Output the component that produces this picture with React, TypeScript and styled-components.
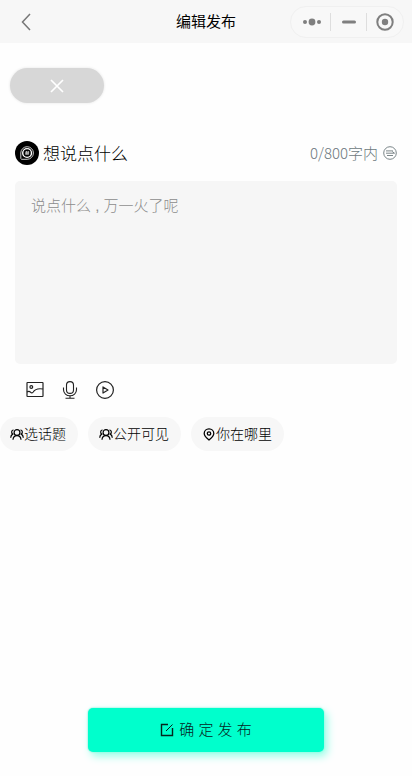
import React from 'react';
import styled, { createGlobalStyle } from 'styled-components';

const GlobalStyle = createGlobalStyle`
  * { box-sizing: border-box; }
  body {
    margin: 0;
    background: #fefefe;
    font-family: 'Liberation Sans', 'Noto Sans CJK SC', sans-serif;
    font-weight: 300;
    color: #000;
  }
  button, textarea { font: inherit; color: inherit; }
  button { border: 0; padding: 0; background: none; cursor: pointer; }
  svg { display: block; flex: none; }
`;

const Page = styled.div`
  min-height: 100vh;
  display: flex;
  flex-direction: column;
  overflow-x: hidden;
`;

const TopBar = styled.header`
  display: grid;
  grid-template-columns: 1fr auto 1fr;
  align-items: center;
  height: 43px;
  padding: 0 8px 0 16px;
  background: #f7f7f7;
`;

const Title = styled.h1`
  margin: 0;
  padding-right: 8px;
  font-size: 15px;
  line-height: 20px;
  font-weight: 400;
  color: #000;
`;

const IconButton = styled.button`
  display: flex;
  align-items: center;
  justify-content: center;
  width: 20px;
  height: 24px;
`;

const Capsule = styled.div`
  justify-self: end;
  display: flex;
  align-items: center;
  width: 114px;
  height: 32px;
  padding-left: 3px;
  border: 1px solid #f0f0f0;
  border-radius: 16px;
  background: #f8f8f8;
  color: #7f7f7f;
`;

const CapsuleButton = styled.button`
  flex: 1;
  display: flex;
  align-items: center;
  justify-content: center;
  height: 18px;
  & + & { border-left: 1px solid #dedede; }
`;

const CloseButton = styled.button`
  display: flex;
  align-items: center;
  justify-content: center;
  width: 94px;
  height: 35px;
  margin: 25px 0 0 10px;
  border-radius: 18px;
  background: #d7d7d7;
  box-shadow: 0 0 3px #e4e4e4;
`;

const Editor = styled.section`
  margin: 36px 15px 0;
`;

const EditorHead = styled.div`
  display: flex;
  align-items: center;
  justify-content: space-between;
  height: 28px;
`;

const Prompt = styled.label`
  display: flex;
  align-items: center;
  gap: 4px;
  font-family: 'Noto Sans CJK SC', sans-serif;
  font-size: 17px;
  line-height: 24px;
`;

const Counter = styled.span`
  display: flex;
  align-items: center;
  gap: 5px;
  font-family: 'Noto Sans CJK SC', sans-serif;
  font-size: 15px;
  line-height: 20px;
  color: #6c787c;
`;

const TextBox = styled.textarea`
  display: block;
  width: 100%;
  height: 183px;
  margin-top: 14px;
  padding: 14px 16px;
  border: 0;
  border-radius: 5px;
  outline: 0;
  resize: none;
  background: #f6f6f6;
  font-size: 15px;
  line-height: 22px;
  &::placeholder { color: #8c8c8c; opacity: 1; }
`;

const MediaBar = styled.div`
  display: flex;
  gap: 15px;
  margin: 14px 0 0 10px;
  color: #222;
`;

const Chips = styled.div`
  display: flex;
  gap: 10px;
  margin-top: 15px;
`;

const Chip = styled.button<{ $flush?: boolean }>`
  display: flex;
  align-items: center;
  height: 34px;
  padding: 0 12px 0 ${p => (p.$flush ? '10px' : '11px')};
  border-radius: 17px;
  background: #f7f7f7;
  font-size: 14px;
  line-height: 20px;
  white-space: nowrap;
`;

const Footer = styled.footer`
  display: flex;
  justify-content: center;
  margin-top: auto;
  padding: 24px 88px;
`;

const Submit = styled.button`
  flex: 1;
  display: flex;
  align-items: center;
  justify-content: center;
  gap: 5px;
  height: 44px;
  border-radius: 5px;
  background: #00ffcc;
  box-shadow: 3px 4px 8px #8fffe6, 0 0 2px #55e5cb;
  font-size: 15px;
  line-height: 20px;
  color: #06251d;
`;

const stroke = { fill: 'none', stroke: 'currentColor' } as const;

const BackIcon = () => (
  <svg width="10" height="18" viewBox="0 0 10 18" {...stroke} strokeWidth="1.5">
    <path d="M9 1 1.5 9 9 17" stroke="#777" />
  </svg>
);

const MoreIcon = () => (
  <svg width="20" height="8" viewBox="0 0 20 8" fill="currentColor">
    <circle cx="3" cy="4" r="2" /><circle cx="10" cy="4" r="3.4" /><circle cx="17" cy="4" r="2" />
  </svg>
);

const MinimizeIcon = () => (
  <svg width="14" height="4" viewBox="0 0 14 4" fill="currentColor">
    <rect y="0.5" width="14" height="3" rx="1.5" />
  </svg>
);

const ExitIcon = () => (
  <svg width="18" height="18" viewBox="0 0 18 18" {...stroke}>
    <circle cx="9" cy="9" r="7.7" strokeWidth="2" />
    <circle cx="9" cy="9" r="3.2" fill="currentColor" stroke="none" />
  </svg>
);

const CrossIcon = () => (
  <svg width="14" height="14" viewBox="0 0 14 14" fill="none" stroke="#fff" strokeWidth="1.7">
    <path d="M1 1 13 13M13 1 1 13" />
  </svg>
);

const TopicIcon = () => (
  <svg width="24" height="24" viewBox="0 0 24 24" fill="none">
    <circle cx="12" cy="12" r="12" fill="#000" />
    <path d="M5.8 17.8V12a6.3 6.3 0 1 1 6.3 6.3H6.2" stroke="#ccc" strokeWidth="1" />
    <circle cx="12.1" cy="12" r="4.4" stroke="#fff" strokeWidth="1.4" />
    <path d="m11.5 10-.4 4m2.200-4-.4 4m-2.700-2.800h4m-4.100 1.600h4" stroke="#ddd" strokeWidth=".8" />
  </svg>
);

const FaceIcon = () => (
  <svg width="14" height="14" viewBox="0 0 14 14" {...stroke} strokeWidth="0.9">
    <circle cx="7" cy="7" r="6.3" />
    <path d="M3 4.900h7M3 7.200h8.500L9.300 5.600M4 9.500h6" />
  </svg>
);

const PictureIcon = () => (
  <svg width="20" height="20" viewBox="0 0 20 20" {...stroke} strokeWidth="1.2">
    <rect x="2" y="2.5" width="16" height="14" rx="0.5" />
    <circle cx="6.3" cy="7" r="1.4" />
    <path d="M2 12c1.400-.8 2.600-.8 3.700.4.8.9 1.800.7 2.500-.4C9.800 9.300 13 8.200 18 9" />
  </svg>
);

const MicIcon = () => (
  <svg width="20" height="20" viewBox="0 0 20 20" {...stroke} strokeWidth="1.1">
    <rect x="6.5" y="1.6" width="7" height="11.8" rx="3.5" />
    <path d="M3.500 7.500v2.300a6.500 6 0 0 0 13 0V7.500M10 15.800v2.400M5.500 18.300h9" />
  </svg>
);

const PlayIcon = () => (
  <svg width="20" height="20" viewBox="0 0 20 20" {...stroke} strokeWidth="1.2">
    <circle cx="10" cy="10" r="8.4" />
    <path d="M8 6.900v6.200l5-3.100z" strokeLinejoin="round" />
  </svg>
);

const PeopleIcon = () => (
  <svg width="14" height="13" viewBox="0 0 14 13" {...stroke} strokeWidth="1.2">
    <circle cx="7" cy="4.5" r="2.9" />
    <path d="M3 11.800c.1-2.500 1.400-4.200 4-4.200s3.900 1.700 4 4.200M3.600 2C1.200 2 1.200 5.300 2.700 6.100 1.300 6.800.8 8 .7 9.700M10.400 2c2.400 0 2.400 3.300.9 4.100 1.400.7 1.900 1.900 2 3.600" />
  </svg>
);

const PinIcon = () => (
  <svg width="14" height="13" viewBox="0 0 14 13" {...stroke} strokeWidth="1.3">
    <path d="M7 12C4.300 9.700 2.200 7.700 2.200 5.400a4.800 4.600 0 0 1 9.600 0C11.800 7.700 9.700 9.700 7 12z" />
    <circle cx="7" cy="5.5" r="1.7" />
  </svg>
);

const EditIcon = () => (
  <svg width="14" height="14" viewBox="0 0 14 14" {...stroke} strokeWidth="1.4">
    <path d="M8 1.500H1.500v11h11V5" />
    <path d="m6 8 6.500-6.500" strokeWidth="1" />
  </svg>
);

export default function App() {
  return (
    <>
      <GlobalStyle />
      <Page>
        <TopBar>
          <IconButton aria-label="返回"><BackIcon /></IconButton>
          <Title>编辑发布</Title>
          <Capsule>
            <CapsuleButton aria-label="更多"><MoreIcon /></CapsuleButton>
            <CapsuleButton aria-label="最小化"><MinimizeIcon /></CapsuleButton>
            <CapsuleButton aria-label="关闭"><ExitIcon /></CapsuleButton>
          </Capsule>
        </TopBar>
        <main>
          <CloseButton aria-label="移除"><CrossIcon /></CloseButton>
          <Editor>
            <EditorHead>
              <Prompt htmlFor="post"><TopicIcon />想说点什么</Prompt>
              <Counter>0/800字内<FaceIcon /></Counter>
            </EditorHead>
            <TextBox id="post" maxLength={800} placeholder="说点什么 , 万一火了呢" />
            <MediaBar>
              <IconButton aria-label="图片"><PictureIcon /></IconButton>
              <IconButton aria-label="语音"><MicIcon /></IconButton>
              <IconButton aria-label="视频"><PlayIcon /></IconButton>
            </MediaBar>
          </Editor>
          <Chips>
            <Chip $flush><PeopleIcon />选话题</Chip>
            <Chip><PeopleIcon />公开可见</Chip>
            <Chip><PinIcon />你在哪里</Chip>
          </Chips>
        </main>
        <Footer>
          <Submit><EditIcon />确 定 发 布</Submit>
        </Footer>
      </Page>
    </>
  );
}
